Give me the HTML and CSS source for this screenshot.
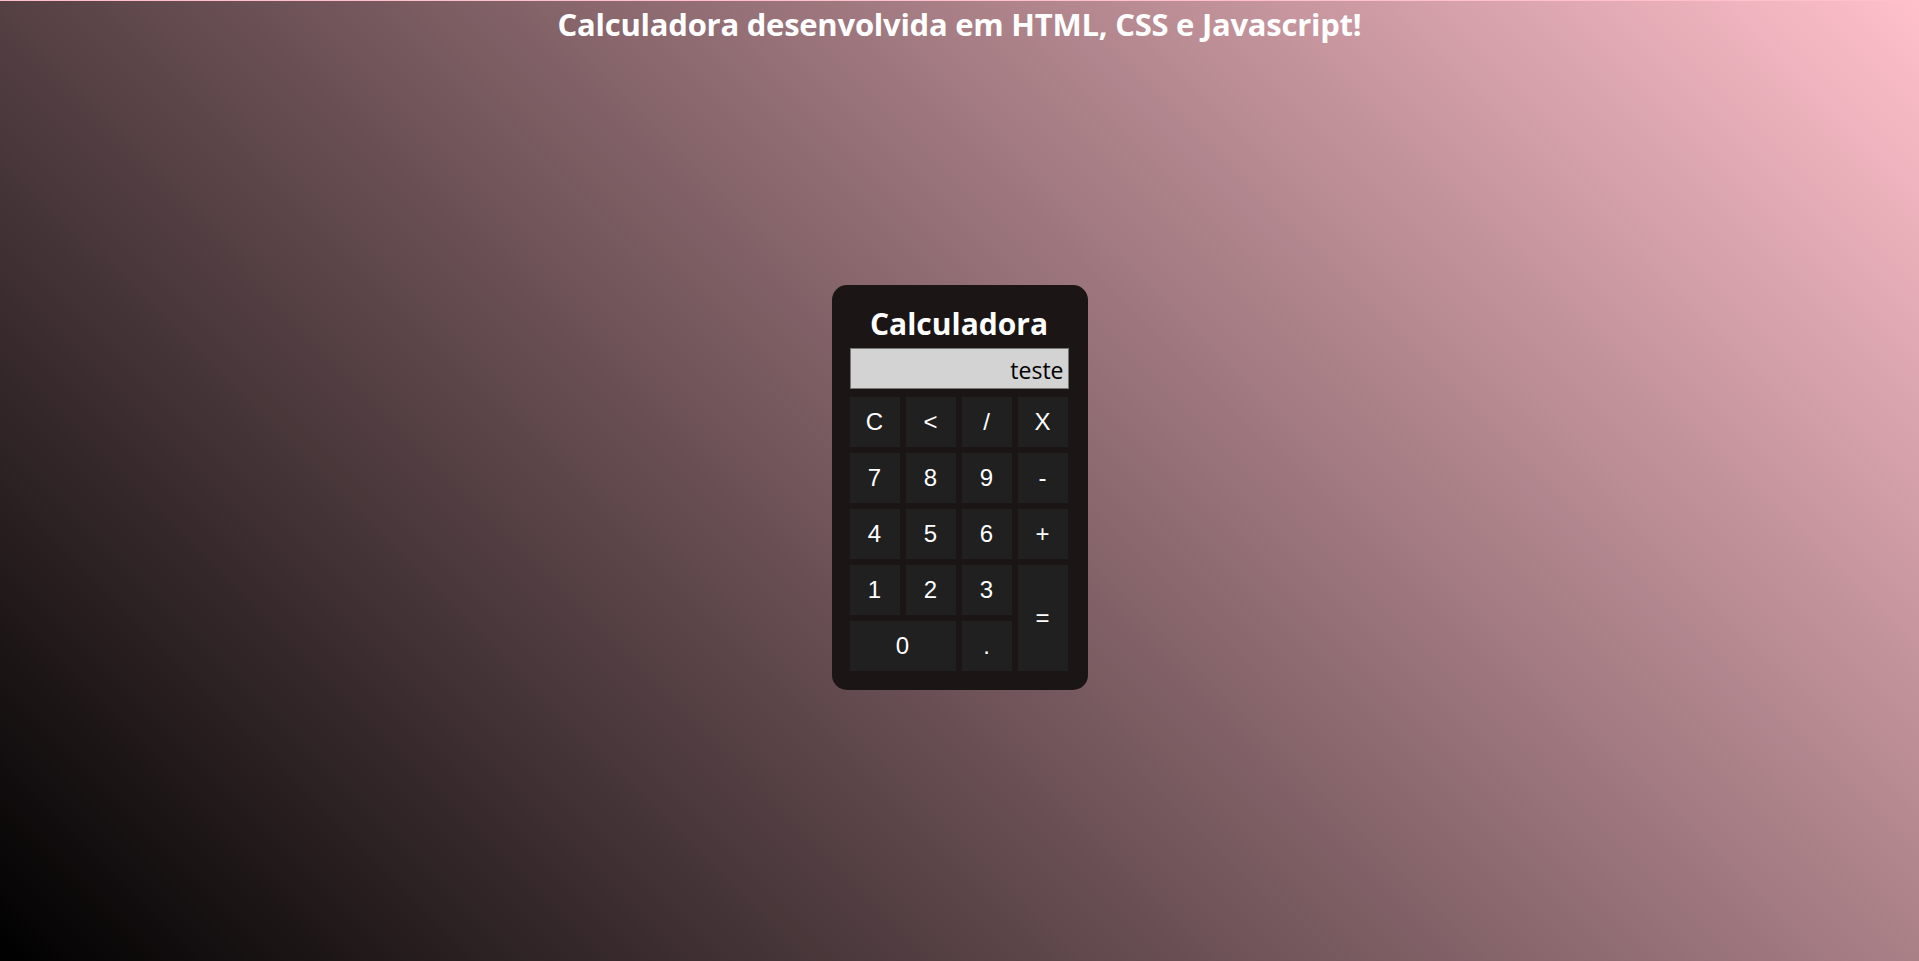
FILE: index.html
```html
<!DOCTYPE html>
<html lang="pt-BR">
<head>
<meta charset="utf-8">
<title>Calculadora</title>
<link rel="stylesheet" href="styles.css">
</head>
<body>
<div class="page">
  <h1 class="title">Calculadora desenvolvida em HTML, CSS e Javascript!</h1>
  <main class="stage">
    <div class="calc">
      <h2 class="calc-title">Calculadora</h2>
      <div class="display">teste</div>
      <div class="keys">
        <button class="key">C</button>
        <button class="key">&lt;</button>
        <button class="key">/</button>
        <button class="key">X</button>
        <button class="key">7</button>
        <button class="key">8</button>
        <button class="key">9</button>
        <button class="key">-</button>
        <button class="key">4</button>
        <button class="key">5</button>
        <button class="key">6</button>
        <button class="key">+</button>
        <button class="key">1</button>
        <button class="key">2</button>
        <button class="key">3</button>
        <button class="key key-tall">=</button>
        <button class="key key-wide">0</button>
        <button class="key">.</button>
      </div>
    </div>
  </main>
</div>
</body>
</html>
```

FILE: styles.css
```css
* { box-sizing: border-box; }
html, body { margin: 0; padding: 0; }
body {
  background: #ffc0cb;
  padding-top: 1px;
}
.page {
  min-height: 960px;
  background: linear-gradient(45deg, #000000, #ffc0cb);
  display: flex;
  flex-direction: column;
}
.title {
  margin: 0;
  text-align: center;
  color: #ffffff;
  font-family: "Open Sans", "Noto Sans", sans-serif;
  font-weight: 700;
  font-size: 31px;
  line-height: 46px;
  letter-spacing: -0.25px;
}
.stage {
  flex: 1;
  display: flex;
  align-items: center;
  justify-content: center;
  padding-bottom: 34px;
}
.calc {
  width: 256px;
  background: #1b1515;
  border-radius: 15px;
  padding: 19px 19px 19px 18px;
}
.calc-title {
  margin: 0 0 4px;
  text-align: center;
  color: #ffffff;
  font-family: "Open Sans", "Noto Sans", sans-serif;
  font-weight: 700;
  font-size: 30px;
  line-height: 40px;
  letter-spacing: 0;
}
.display {
  width: 219px;
  height: 41px;
  background: #d3d3d3;
  border: 1px solid #767676;
  color: #000000;
  font-family: "Open Sans", "Noto Sans", sans-serif;
  font-size: 23px;
  line-height: 39px;
  text-align: right;
  padding: 2px 4px 0;
}
.keys {
  margin-top: 8px;
  display: grid;
  grid-template-columns: repeat(4, 50px);
  grid-auto-rows: 50px;
  gap: 6px;
}
.key {
  background: #202020;
  color: #ffffff;
  border: none;
  padding: 0;
  margin: 0;
  font-family: "Liberation Sans", Arial, sans-serif;
  font-size: 24px;
}
.key-tall { grid-row: span 2; }
.key-wide { grid-column: span 2; }
```
